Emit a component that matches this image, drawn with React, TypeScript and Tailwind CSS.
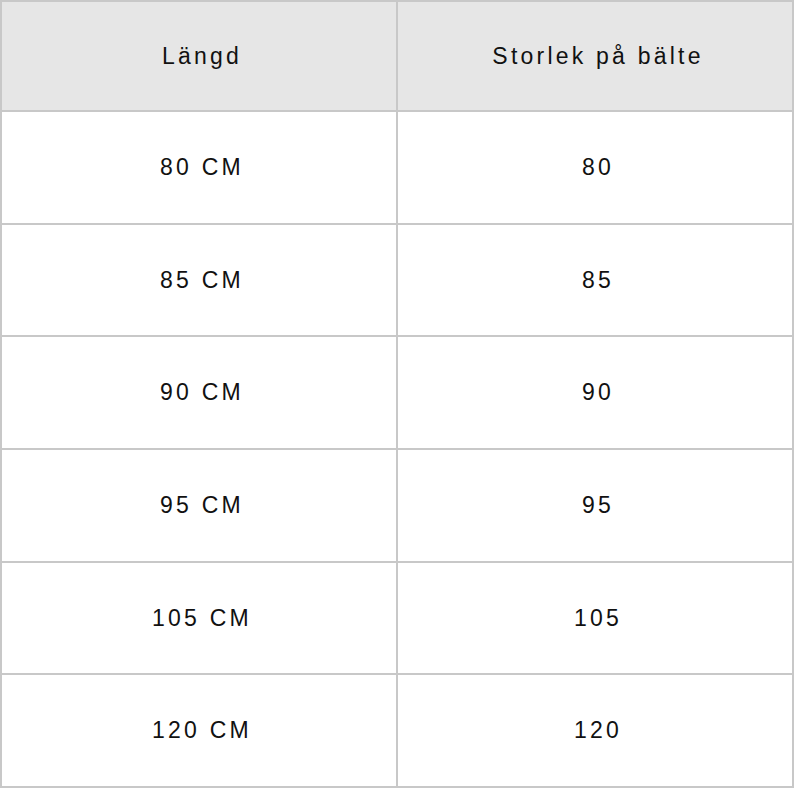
const rows = [
  { length: "80 CM", size: "80" },
  { length: "85 CM", size: "85" },
  { length: "90 CM", size: "90" },
  { length: "95 CM", size: "95" },
  { length: "105 CM", size: "105" },
  { length: "120 CM", size: "120" },
];

/**
 * Table cell
 */
function Cell({ children, header }: { children: React.ReactNode; header?: boolean }) {
  return (
    <div
      className={`flex items-center justify-center pl-[6px] text-[23px] tracking-[0.14em] text-[#111] ${
        header ? "bg-[#e6e6e6]" : "bg-white"
      }`}
    >
      {children}
    </div>
  );
}

/**
 * Belt size chart
 */
export default function App() {
  return (
    <div
      className="grid h-[788px] w-[794px] grid-cols-2 grid-rows-[108px_repeat(6,1fr)] gap-[2px] bg-[#c8c8c8] p-[2px]"
      style={{ fontFamily: '"Liberation Sans", Arial, sans-serif' }}
    >
      <Cell header>Längd</Cell>
      <Cell header>Storlek på bälte</Cell>
      {rows.map((row) => (
        <>
          <Cell key={row.length}>{row.length}</Cell>
          <Cell key={row.size}>{row.size}</Cell>
        </>
      ))}
    </div>
  );
}
